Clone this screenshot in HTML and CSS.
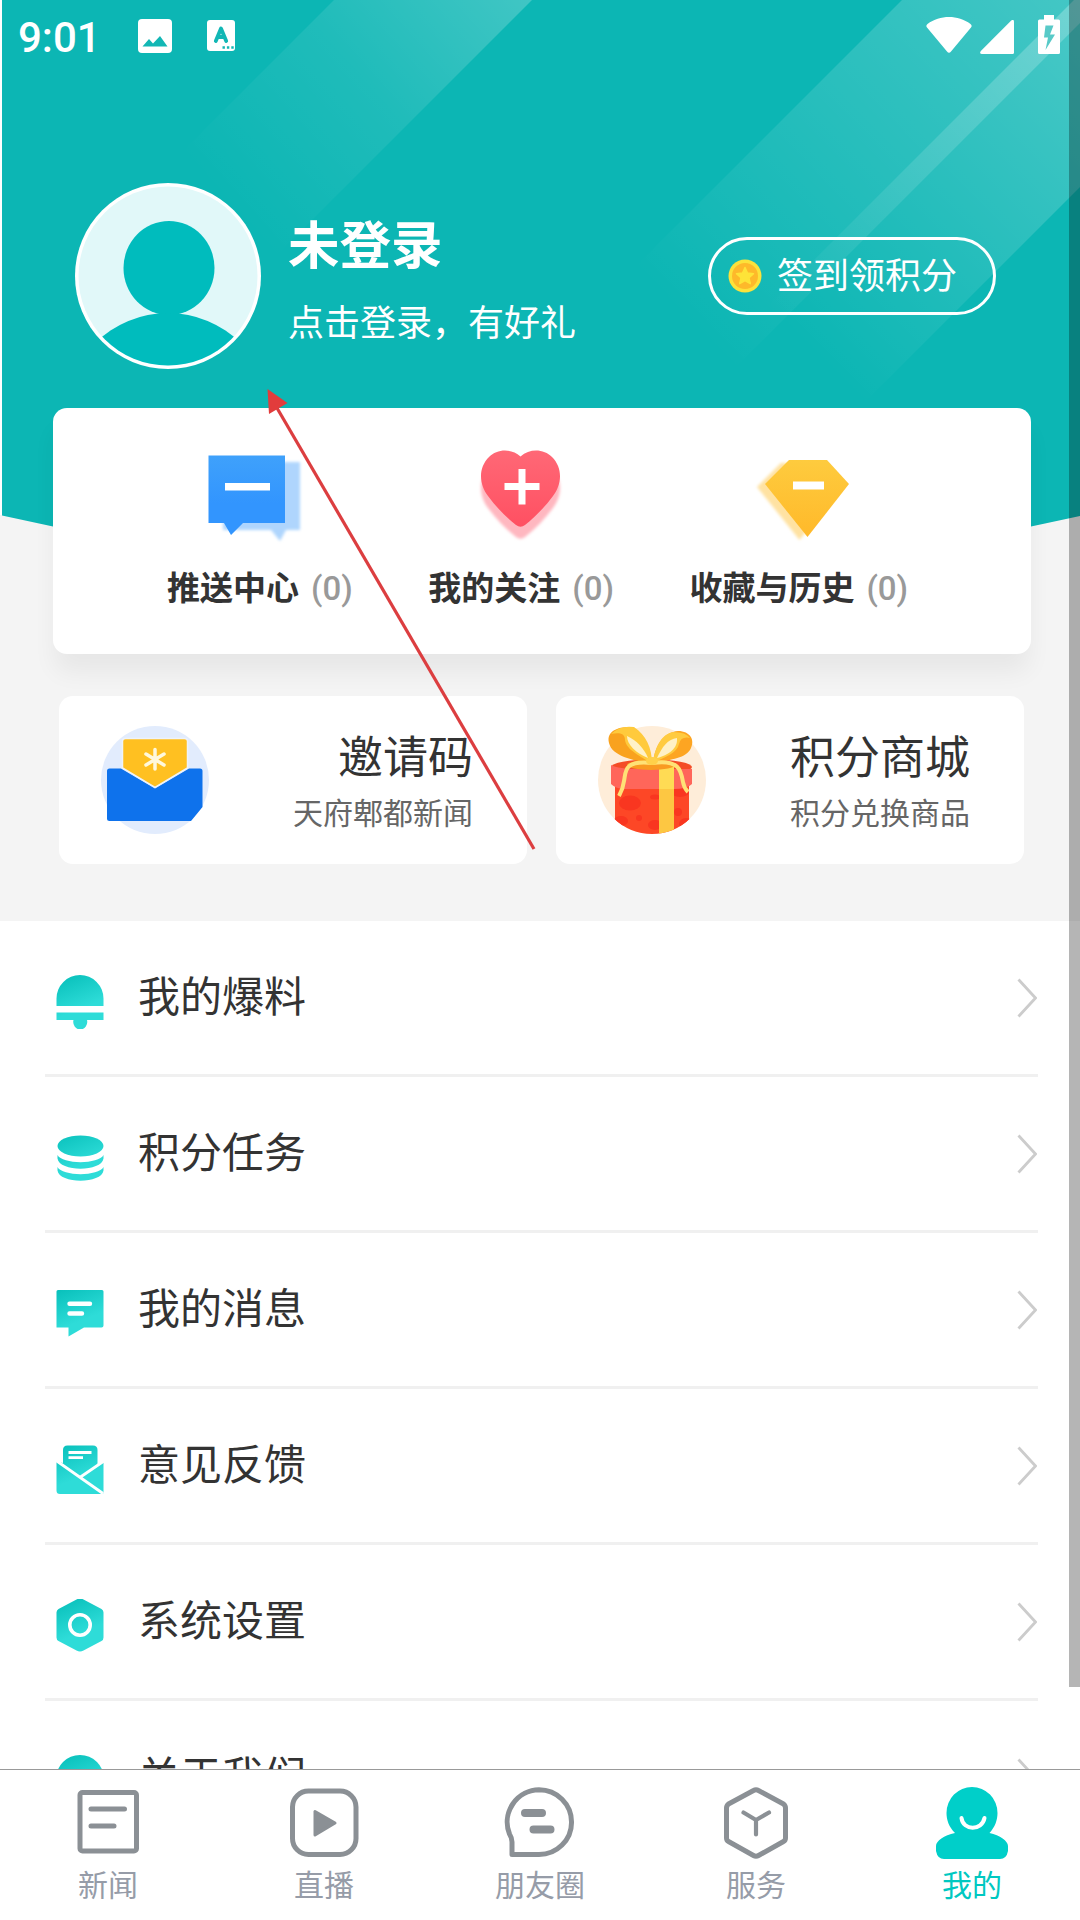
FILE: index.html
```html
<!DOCTYPE html>
<html lang="zh-CN">
<head>
<meta charset="utf-8">
<title>我的</title>
<link rel="stylesheet" href="styles.css">
</head>
<body>
<svg class="defs" width="0" height="0" aria-hidden="true">
  <defs>
    <linearGradient id="teal" x1="8" y1="0" x2="28" y2="50" gradientUnits="userSpaceOnUse"><stop offset="0" stop-color="#08c0bb"/><stop offset=".7" stop-color="#2edcd8"/></linearGradient>
    <filter id="soft"><feGaussianBlur stdDeviation="1.8"/></filter>
  </defs>
</svg>
<div class="screen">
  <main class="content">
    <section class="top">
      <svg class="backdrop" viewBox="0 0 1080 540">
        <defs>
          <linearGradient id="b1" gradientUnits="userSpaceOnUse" x1="530" y1="-10" x2="255" y2="235"><stop offset="0" stop-color="#fff" stop-opacity=".22"/><stop offset=".5" stop-color="#fff" stop-opacity=".08"/><stop offset="1" stop-color="#fff" stop-opacity="0"/></linearGradient>
          <linearGradient id="b2" gradientUnits="userSpaceOnUse" x1="1085" y1="0" x2="720" y2="355"><stop offset="0" stop-color="#fff" stop-opacity=".23"/><stop offset="1" stop-color="#fff" stop-opacity="0"/></linearGradient>
          <linearGradient id="b3" gradientUnits="userSpaceOnUse" x1="1130" y1="60" x2="825" y2="365"><stop offset="0" stop-color="#fff" stop-opacity=".25"/><stop offset="1" stop-color="#fff" stop-opacity="0"/></linearGradient>
        </defs>
        <path fill="#0cb6b4" d="M2 0H1080V516L1031 526.5L800 560H260L53 526.5L2 515.5Z"/>
        <path fill="url(#b1)" d="M334 0H532L232 300H34Z"/>
        <path fill="url(#b2)" d="M902 0H1080V23L703 400H502Z"/>
        <path fill="url(#b3)" d="M1074 0H1080V187L867 400H674Z"/>
      </svg>
      <header class="statusbar">
        <span class="clock">9:01</span>
        <svg class="ic-picture" viewBox="0 0 34 34"><rect width="34" height="34" rx="4" fill="#fff"/><path d="M4.500 27.500L11 20L15 24.500L22 17L29.500 27.500Z" fill="#12b7b5"/></svg>
        <svg class="ic-letter" viewBox="0 0 28 31"><rect width="28" height="31" rx="3" fill="#fff"/><path d="M8.800 21L14 8.500L19.200 21M10.500 17H17.500" fill="none" stroke="#12b7b5" stroke-width="3.800" stroke-linecap="round" stroke-linejoin="round"/><path d="M15.500 27.500h2.400m2 0h2.400m2 0h2.400" stroke="#12b7b5" stroke-width="2.600"/></svg>
        <span class="fill"></span>
        <svg class="ic-wifi" viewBox="0 0 46 36"><path fill="#fff" d="M1 10.500Q-.5 8.500 1.500 7C14-2.300 32-2.300 44.500 7Q46.500 8.500 45 10.500L25 34.500Q23 37 21 34.500Z"/></svg>
        <svg class="ic-signal" viewBox="0 0 34 34"><path fill="#fff" d="M31 .7Q34-1.500 34 2V32.500Q34 34 32.500 34H2Q-1 34 .8 31Z"/></svg>
        <svg class="ic-battery" viewBox="0 0 22 39"><path fill="#fff" d="M6 0H16V4.500H20.500Q22 4.500 22 6V37.500Q22 39 20.500 39H1.500Q0 39 0 37.500V6Q0 4.500 1.500 4.500H6Z"/><path fill="#58cac8" d="M7.500 10.500H15.500L12 19.500H17L7.500 35L10 22.500H6Z"/></svg>
      </header>
      <div class="profile">
        <svg class="avatar" viewBox="0 0 186 186"><defs><clipPath id="av"><circle cx="93" cy="93" r="89.500"/></clipPath></defs><circle cx="93" cy="93" r="93" fill="#fff"/><circle cx="93" cy="93" r="89.500" fill="#e1f8f9"/><g clip-path="url(#av)" fill="#00bcbd"><ellipse cx="94" cy="85" rx="45.500" ry="47"/><circle cx="93" cy="233.500" r="103.500"/></g></svg>
        <div class="who"><div class="name">未登录</div><div class="hint">点击登录，有好礼</div></div>
        <div class="signin">
          <svg class="coin" viewBox="0 0 34 34"><circle cx="17" cy="17" r="16.500" fill="#fce23b"/><circle cx="17" cy="17" r="13" fill="#feb92a"/><path fill="#fee338" stroke="#fee338" stroke-width="1.500" stroke-linejoin="round" d="M17 8.500L19.500 14L25.500 14.700L21 18.800L22.300 24.700L17 21.700L11.700 24.700L13 18.800L8.500 14.700L14.500 14Z"/></svg>
          <span>签到领积分</span>
        </div>
      </div>
      <div class="stats">
        <div class="stat">
          <svg class="stat-ic" viewBox="0 0 94 94"><defs><linearGradient id="blue" x1="0" y1="0" x2="0" y2="1"><stop offset="0" stop-color="#3fa1fb"/><stop offset=".6" stop-color="#3295fe"/></linearGradient></defs><path filter="url(#soft)" fill="#afd5fd" d="M11 19H88V87H74L68 98L59 87H11Z"/><path fill="url(#blue)" d="M-3.500 12.500H73V80H31L19 92L12 80H-3.500Z"/><path fill="#fff" d="M13 40H58V47.500H13Z"/></svg>
          <div class="stat-label">推送中心<span>(0)</span></div>
        </div>
        <div class="stat">
          <svg class="stat-ic" viewBox="0 0 94 94"><defs><linearGradient id="red" x1="0" y1="0" x2="0" y2="1"><stop offset="0" stop-color="#ff6876"/><stop offset="1" stop-color="#ff5062"/></linearGradient><path id="heart" d="M47.500 13.500C57 5 71 6 79 14C90 25 89 41 80 53C72 64 62 74 52 82Q47.500 85.500 43 82C33 74 23 64 15 53C6 41 5 25 16 14C24 6 38 5 47.500 13.500Z"/></defs><use href="#heart" y="12" fill="#ffb7c0" filter="url(#soft)"/><use href="#heart" fill="url(#red)"/><path stroke="#fff" stroke-width="7" d="M31.500 43.500H66.500M49 26V61.500"/></svg>
          <div class="stat-label">我的关注<span>(0)</span></div>
        </div>
        <div class="stat">
          <svg class="stat-ic" viewBox="0 0 94 94"><defs><linearGradient id="gold" x1="0" y1="0" x2="0" y2="1"><stop offset="0" stop-color="#fecb3e"/><stop offset="1" stop-color="#ffb92a"/></linearGradient><path id="gem" d="M38 17H76L98 41L56.500 94L14 41Z"/></defs><use href="#gem" x="-8" y="3" fill="#ffe2a2" filter="url(#soft)"/><use href="#gem" fill="url(#gold)"/><path fill="#fff" d="M42 38.500H73V46.500H42Z"/></svg>
          <div class="stat-label">收藏与历史<span>(0)</span></div>
        </div>
      </div>
      <div class="cards">
        <div class="card">
          <svg class="card-ic" viewBox="0 0 108 108"><circle cx="54" cy="54" r="54" fill="#e2ecfd"/><path fill="#0e72ec" d="M8.500 42.500H20L54 62.500L88 42.500H99Q101.500 42.500 101.500 45V81L90 95H8.500Q6 95 6 92.500V45Q6 42.500 8.500 42.500Z"/><path fill="#ffc021" stroke="#eef3fb" stroke-width="1.500" d="M24.500 12.500H83.500Q86.500 12.500 86.500 15V42L54 61.500L21.500 42V15Q21.500 12.500 24.500 12.500Z"/><path stroke="#fff8dc" stroke-width="3.500" stroke-linecap="round" d="M54 23.500V43M45 28L63 39M63 28L45 39"/></svg>
          <div class="card-text"><b>邀请码</b><span>天府郫都新闻</span></div>
        </div>
        <div class="card">
          <svg class="card-ic" viewBox="0 0 108 108"><defs><clipPath id="box"><path d="M0-10H108V54A54 54 0 0 1 0 54Z"/></clipPath></defs><circle cx="54" cy="54" r="54" fill="#feedd9"/><g clip-path="url(#box)"><path fill="#fd4726" d="M17 55H91V108H17Z"/><g fill="#f93620"><ellipse cx="32" cy="77" rx="11" ry="7.500"/><ellipse cx="23" cy="95" rx="7" ry="5"/><circle cx="41" cy="92" r="3"/><ellipse cx="57" cy="71" rx="5" ry="2.500"/><ellipse cx="57" cy="99" rx="7" ry="5"/><circle cx="80" cy="86" r="4"/><ellipse cx="88" cy="98" rx="7" ry="6"/><ellipse cx="82" cy="66" rx="9" ry="5"/></g><path fill="#fdc742" d="M61 52H76V108H61Z"/></g><ellipse cx="53.500" cy="41" rx="40.500" ry="7.500" fill="#f44d26"/><path fill="#ff665a" d="M13 39Q20 43 42 43H94V58Q89 63 76 63H24Q17 62 13 58Z"/><path fill="#ffdb54" d="M61 40H76V63H61Z"/><ellipse cx="53" cy="39" rx="24" ry="5" fill="#f99a22"/><g stroke-linejoin="round"><path fill="#f9a21e" d="M54 38C34 34 14 30 11 17C8 5 20 1 31 1C45 5 52 18 54 38Z"/><path fill="#ffca3c" d="M54 38C43 30 28 24 27 14C27 6 19 7 13 8Q22-1 36 1C48 9 54 22 54 38Z"/><path fill="#fff2c8" d="M50 32C38 27 29 19 29 10C38 14 46 22 50 32Z"/><path fill="#fda522" d="M55 37C57 18 67 6 80 5C92 5 98 14 92 24C86 33 70 34 55 37Z"/><path fill="#ffcb40" d="M55 37C57 20 64 8 75 6Q88 6 92 12Q83 10 81 18C79 27 67 31 55 37Z"/><path fill="#fff1c6" d="M59 32C64 21 70 13 79 12C80 23 70 29 59 32Z"/></g><path fill="none" stroke="#ffe176" stroke-width="4" d="M54 37C25 34 28 46 26 55Q25 63 21 70M54 37C81 33 83 44 85 56Q86 62 90 66"/><ellipse cx="54" cy="35" rx="6" ry="4" fill="#ffd04a"/></svg>
          <div class="card-text"><b>积分商城</b><span>积分兑换商品</span></div>
        </div>
      </div>
    </section>
    <ul class="menu">
      <li><svg class="menu-ic" viewBox="0 0 48 54"><path fill="url(#teal)" d="M.5 31V23.500A23.500 23.500 0 0 1 47.500 23.500V31ZM.5 37.500H47.500V45H31A7 7.500 0 1 1 17.500 45H.5Z"/></svg><span>我的爆料</span><svg class="go" viewBox="0 0 20 40"><path d="M1.500 1.500L18.500 20L1.500 38.500"/></svg></li>
      <li><svg class="menu-ic" viewBox="0 0 48 54"><g fill="url(#teal)"><ellipse cx="24.500" cy="15" rx="23" ry="10.500"/><path d="M1.500 24C6 33.500 43 33.500 47.500 24V27.500C46 41 3 41 1.500 27.500ZM1.500 36C6 45.500 43 45.500 47.500 36V39.500C46 53 3 53 1.500 39.500Z"/></g></svg><span>积分任务</span><svg class="go" viewBox="0 0 20 40"><path d="M1.500 1.500L18.500 20L1.500 38.500"/></svg></li>
      <li><svg class="menu-ic" viewBox="0 0 48 54"><path fill="url(#teal)" d="M2 3H46Q47.500 3 47.500 4.500V38.500Q47.500 40.500 45.500 40.500H28L12.500 49.500V40.500H.5V4.500Q.5 3 2 3Z"/><path stroke="#fff" stroke-width="4.400" stroke-linecap="round" d="M13.500 16.700H34M13.500 26.500H26"/></svg><span>我的消息</span><svg class="go" viewBox="0 0 20 40"><path d="M1.500 1.500L18.500 20L1.500 38.500"/></svg></li>
      <li><svg class="menu-ic" viewBox="0 0 48 54"><path fill="url(#teal)" d="M7 20V7Q7 2.500 11.500 2.500H37Q41.500 2.500 41.500 7V23L47.500 19V49.500Q47.500 51 45.500 51H4Q.5 51 .5 47.500V18.500Z"/><path stroke="#fff" stroke-width="2.800" fill="none" d="M0 17.500L47 50.500M24.500 34L48 18M12.500 9.500H35.500M12.500 14.700H27"/></svg><span>意见反馈</span><svg class="go" viewBox="0 0 20 40"><path d="M1.500 1.500L18.500 20L1.500 38.500"/></svg></li>
      <li><svg class="menu-ic" viewBox="0 0 48 54"><path fill="url(#teal)" d="M20.500 .5Q24 -1.500 27.500 .5L45.500 10Q47.500 11 47.500 13.500V38.500Q47.500 41 45.500 42L27.500 51.500Q24 53.500 20.500 51.500L2.500 42Q.5 41 .5 38.500V13.500Q.5 11 2.500 10Z"/><circle cx="24" cy="26" r="10.200" fill="none" stroke="#fff" stroke-width="3.600"/></svg><span>系统设置</span><svg class="go" viewBox="0 0 20 40"><path d="M1.500 1.500L18.500 20L1.500 38.500"/></svg></li>
      <li><svg class="menu-ic" viewBox="0 0 48 54"><circle cx="24" cy="24" r="24" fill="url(#teal)"/></svg><span>关于我们</span><svg class="go" viewBox="0 0 20 40"><path d="M1.500 1.500L18.500 20L1.500 38.500"/></svg></li>
    </ul>
  </main>
  <nav class="tabs">
    <a class="tab"><svg viewBox="0 0 72 72"><rect x="8" y="5.500" width="56.500" height="58.500" rx="2.500"/><path d="M19 22H52.500M19 39H42" stroke-linecap="round"/></svg><span>新闻</span></a>
    <a class="tab"><svg viewBox="0 0 72 72"><rect x="4.500" y="4" width="63.500" height="63.500" rx="16"/><path fill="#8b9095" stroke-width="3" stroke-linejoin="round" d="M27 24.500V48L47 36Z"/></svg><span>直播</span></a>
    <a class="tab"><svg viewBox=".5 0 72 72"><path stroke-linejoin="round" d="M35.500 2.800A32.500 32.300 0 1 1 35.500 67.500H8.500V55Q8.500 51 6 47A32.500 32.300 0 0 1 35.500 2.800Z"/><path stroke-width="8" stroke-linecap="round" d="M21.500 26H38.500M30 42.500H47"/></svg><span>朋友圈</span></a>
    <a class="tab"><svg viewBox="0 0 72 72"><path stroke-linejoin="round" d="M33.500 3.500Q36 2 38.500 3.500L63.500 17Q65.500 18.500 65.500 21V51Q65.500 53.500 63.500 54.500L38.500 68.500Q36 70 33.500 68.500L8.500 54.500Q6.500 53.500 6.500 51V21Q6.500 18.500 8.500 17Z"/><path stroke-width="4.200" stroke-linecap="round" stroke-linejoin="round" d="M23.500 25.500L36 33L49 25.500M36 33V47.500"/></svg><span>服务</span></a>
    <a class="tab active"><svg viewBox="0 0 72 72"><path stroke="none" fill="#00cfc9" d="M19 46C13 40 10.500 33 10.500 26A25.500 26 0 0 1 61.500 26C61.500 33 59 40 53.500 46C64 48 72 54 72 59V64Q70.500 72 64 72H8Q1.500 72 0 64V59C0 54 8 48 19 46Z"/><path stroke="#fff" stroke-width="4" stroke-linecap="round" d="M25.500 31C27 44 46 44 48.500 31"/></svg><span>我的</span></a>
  </nav>
  <div class="scrollbar"></div>
  <svg class="arrow" viewBox="0 0 280 470"><path d="M272 464L15 23" stroke="#dc3e40" stroke-width="3.200"/><path fill="#e23c3c" d="M5.500 4L25.500 18L7 29Z"/></svg>
</div>
</body>
</html>
```
FILE: styles.css
```css
* { box-sizing: border-box; }
body {
  margin: 0;
  background: #fff;
  font-family: Roboto, "Noto Sans CJK SC", sans-serif;
  color: #333;
}
svg { display: block; flex: none; }
.defs { position: absolute; }
.screen {
  position: relative;
  display: flex;
  flex-direction: column;
  width: 1080px;
  height: 1920px;
  overflow: hidden;
}
.content { height: 1769px; overflow: hidden; }

/* Header area */
.top {
  position: relative;
  z-index: 0;
  height: 921px;
  background: linear-gradient(90deg, #fff 2px, #f4f4f4 2px) top / 100% 515px no-repeat #f4f4f4;
}
.backdrop {
  position: absolute;
  z-index: -1;
  top: 0;
  left: 0;
  width: 1080px;
  height: 540px;
}
.statusbar {
  display: flex;
  align-items: flex-start;
  height: 72px;
  padding: 15px 20px 0 18px;
}
.clock {
  width: 120px;
  font-size: 42px;
  font-weight: 500;
  line-height: 45px;
  color: #fff;
}
.fill { flex: 1; }
.ic-picture { width: 34px; height: 34px; margin-top: 4px; }
.ic-letter { width: 28px; height: 31px; margin: 5px 0 0 35px; }
.ic-wifi { width: 46px; height: 36px; margin-top: 2px; }
.ic-signal { width: 34px; height: 34px; margin: 5px 24px 0 8px; }
.ic-battery { width: 22px; height: 39px; }

.profile {
  display: flex;
  align-items: center;
  margin-top: 111px;
  padding: 0 84px 0 75px;
  color: #fff;
}
.avatar { width: 186px; height: 186px; }
.who { flex: 1; padding: 8px 0 0 27px; }
.name { font-size: 51.5px; font-weight: 700; line-height: 76px; }
.hint { margin-top: 12px; font-size: 36px; line-height: 54px; white-space: nowrap; }
.signin {
  display: flex;
  align-items: center;
  width: 288px;
  height: 78px;
  padding-left: 17px;
  border: 3px solid #fff;
  border-radius: 39px;
  font-size: 36px;
  line-height: 54px;
}
.coin { width: 34px; height: 34px; margin-right: 15px; }
.signin span { margin-top: 2px; }

.stats {
  display: flex;
  gap: 75.5px;
  width: 978px;
  height: 246px;
  margin: 39px 0 0 53px;
  padding: 35px 0 0 114px;
  border-radius: 14px;
  background: #fff;
  box-shadow: 0 20px 24px -2px rgba(0, 0, 0, .055);
}
.stat { display: flex; flex-direction: column; align-items: center; }
.stat-ic { width: 94px; height: 94px; margin-right: 2px; overflow: visible; }
.stat-label {
  margin-top: 27px;
  font-size: 33px;
  font-weight: 700;
  line-height: 50px;
  white-space: nowrap;
}
.stat-label span { margin-left: 12px; font-weight: 500; color: #999; }

.cards { display: flex; gap: 29px; margin: 42px 56px 0 59px; }
.card {
  display: flex;
  justify-content: space-between;
  width: 468px;
  height: 168px;
  padding: 30px 54px 0 42px;
  border-radius: 14px;
  background: #fff;
}
.card-ic { width: 108px; height: 108px; }
.card-text { display: flex; flex-direction: column; align-items: flex-end; padding-top: 3px; }
.card-text b { font-size: 45px; font-weight: 400; line-height: 60px; }
.card-text span { margin-top: 3px; font-size: 30px; line-height: 44px; color: #666; }

/* Menu list */
.menu { margin: 0; padding: 0 42px 0 45px; list-style: none; }
.menu li {
  display: flex;
  align-items: center;
  height: 156px;
  padding: 0 1px 0 11px;
  border-bottom: 3px solid #f0f0f0;
  font-size: 42px;
}
.menu-ic { width: 48px; height: 54px; margin-top: 9px; }
.menu li span { flex: 1; padding-left: 34px; line-height: 60px; }
.go { width: 20px; height: 40px; }
.go path { fill: none; stroke: #ccc; stroke-width: 2.8; }

/* Bottom tabs */
.tabs {
  display: grid;
  grid-template-columns: repeat(5, 1fr);
  height: 151px;
  border-top: 1px solid #999;
  background: #fff;
}
.tab {
  display: flex;
  flex-direction: column;
  align-items: center;
  padding-top: 17px;
  font-size: 30px;
  line-height: 44px;
  color: #969ca8;
}
.tab svg { width: 72px; height: 72px; fill: none; stroke: #8b9095; stroke-width: 5; }
.tab span { margin-top: 5px; }
.tab.active { color: #00c8c1; }

.scrollbar {
  position: absolute;
  top: 0;
  right: 0;
  width: 11px;
  height: 1687px;
  background: rgba(0, 0, 0, .29);
}
.arrow { position: absolute; left: 262px; top: 385px; width: 280px; height: 470px; }
```
